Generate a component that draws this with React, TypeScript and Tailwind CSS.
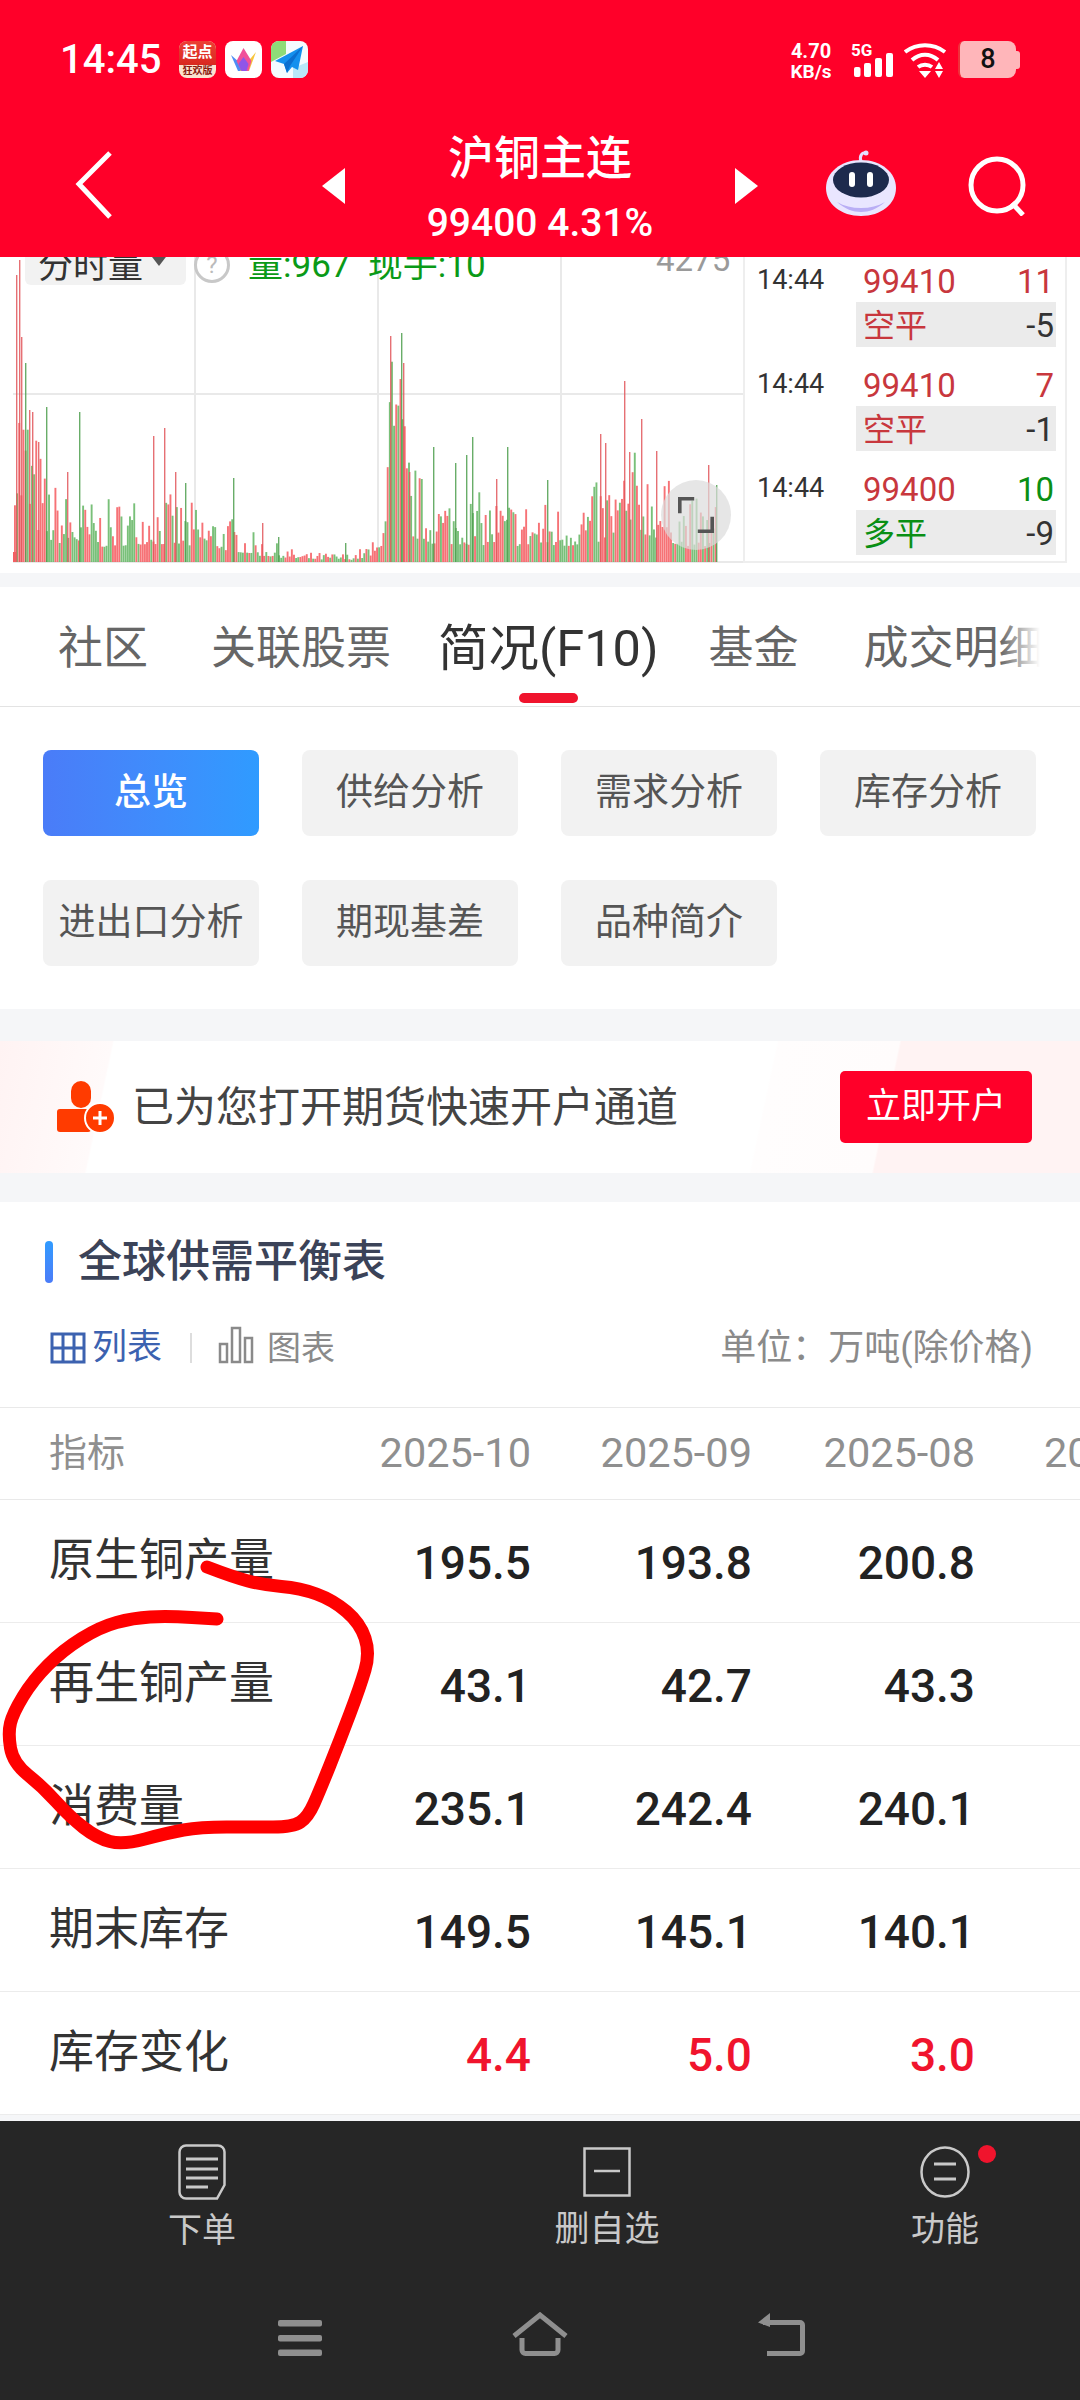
import React from 'react';

const TABS = [
  { label: '社区', className: 'ml-[58px] text-[45px] text-[#666]' },
  { label: '关联股票', className: 'ml-[63px] text-[45px] text-[#666]' },
  { label: '简况(F10)', className: 'ml-[47px] text-[50.5px] text-[#333]' },
  { label: '基金', className: 'ml-[50px] text-[45px] text-[#666]' },
  { label: '成交明细', className: 'ml-[65px] text-[45px] text-[#666]' },
];

const CHIPS = ['总览', '供给分析', '需求分析', '库存分析', '进出口分析', '期现基差', '品种简介'];

const TICKS = [
  { price: '99410', hand: '11', handColor: 'text-[#c8373d]', kind: '空平', kindColor: 'text-[#c8373d]', diff: '-5' },
  { price: '99410', hand: '7', handColor: 'text-[#c8373d]', kind: '空平', kindColor: 'text-[#c8373d]', diff: '-1' },
  { price: '99400', hand: '10', handColor: 'text-[#0a8f14]', kind: '多平', kindColor: 'text-[#0a8f14]', diff: '-9' },
];

const ROWS = [
  { name: '原生铜产量', values: ['195.5', '193.8', '200.8'] },
  { name: '再生铜产量', values: ['43.1', '42.7', '43.3'] },
  { name: '消费量', values: ['235.1', '242.4', '240.1'] },
  { name: '期末库存', values: ['149.5', '145.1', '140.1'] },
  { name: '库存变化', values: ['4.4', '5.0', '3.0'], red: true },
];

// [x, y] of the tall bars, in page pixels
const PEAKS: [number, number, string][] = [
  [16, 275, 'r'], [19, 260, 'r'], [21, 337, 'r'], [25, 363, 'g'], [29, 410, 'r'], [32, 412, 'r'],
  [38, 442, 'r'], [46, 407, 'g'], [67, 472, 'r'], [79, 412, 'g'], [153, 436, 'r'], [164, 428, 'r'],
  [175, 472, 'r'], [185, 483, 'g'], [233, 478, 'g'], [262, 523, 'r'], [278, 537, 'g'], [345, 543, 'g'],
  [390, 336, 'r'], [401, 333, 'g'], [403, 363, 'r'], [409, 472, 'r'], [433, 447, 'g'], [455, 463, 'g'],
  [466, 455, 'g'], [472, 437, 'g'], [496, 479, 'r'], [507, 447, 'g'], [547, 480, 'g'], [600, 434, 'r'],
  [605, 443, 'r'], [624, 381, 'r'], [629, 452, 'r'], [641, 419, 'r'], [656, 451, 'r'], [708, 465, 'r'],
  [716, 485, 'g'],
];

// resting height of the volume bars along the session: [x, top y]
const ENVELOPE: [number, number][] = [
  [14, 400], [30, 450], [45, 500], [70, 515], [100, 520], [150, 510], [190, 520], [230, 530],
  [260, 545], [300, 555], [350, 556], [378, 545], [390, 400], [400, 420], [410, 490], [430, 510],
  [500, 515], [560, 520], [600, 505], [640, 480], [680, 515], [716, 520],
];

const envelopeAt = (x: number) => {
  for (let i = 1; i < ENVELOPE.length; i++) {
    const [x0, y0] = ENVELOPE[i - 1];
    const [x1, y1] = ENVELOPE[i];
    if (x <= x1) return y0 + ((y1 - y0) * (x - x0)) / (x1 - x0);
  }
  return 520;
};

const makeBars = () => {
  let seed = 7;
  const rand = () => {
    seed = (seed * 16807) % 2147483647;
    return seed / 2147483647;
  };
  const bars: { x: number; y: number; c: string }[] = [];
  for (let x = 14; x < 716; x += 2.13) {
    const top = envelopeAt(x);
    const r = rand();
    const h = (562 - top) * (0.35 + r * r * 1.1);
    bars.push({ x, y: Math.max(562 - h, 300), c: rand() > 0.5 ? '#f4595e' : '#62b562' });
  }
  return bars;
};

const BARS = makeBars();

const INK_POINTS: [number, number][] = [
  [207, 1567], [233, 1577], [263, 1585], [300, 1588], [333, 1600], [360, 1623], [370, 1653], [360, 1687],
  [340, 1740], [320, 1790], [308, 1817], [293, 1827], [253, 1827], [200, 1827], [167, 1833], [123, 1845],
  [97, 1838], [70, 1817], [43, 1787], [13, 1763], [8, 1733], [13, 1713], [33, 1680], [63, 1650],
  [100, 1627], [133, 1618], [167, 1616], [217, 1619],
];

const inkPath = () => {
  let d = `M${INK_POINTS[0][0]} ${INK_POINTS[0][1]}`;
  for (let i = 1; i < INK_POINTS.length - 1; i++) {
    const [x, y] = INK_POINTS[i];
    const [nx, ny] = INK_POINTS[i + 1];
    d += ` Q${x} ${y} ${(x + nx) / 2} ${(y + ny) / 2}`;
  }
  const last = INK_POINTS[INK_POINTS.length - 1];
  return `${d} L${last[0]} ${last[1]}`;
};

const StatusBar = () => (
  <div className="flex h-[120px] items-start pt-[41px]">
    <span className="ml-[60px] w-[119px] text-[40px] leading-[38px] font-medium text-white">14:45</span>
    <div className="flex h-[37px] w-[37px] flex-col items-center overflow-hidden rounded-[8px] bg-[#fbe3cf]">
      <div className="h-[24px] w-full bg-gradient-to-b from-[#ec3f35] to-[#d9281f] text-center text-[15px] leading-[22px] font-bold text-white">
        起点
      </div>
      <span className="text-[10px] leading-[12px] font-bold text-[#8a1a10]">狂欢版</span>
    </div>
    <svg viewBox="0 0 37 37" className="ml-[9px] h-[37px] w-[37px]">
      <rect width="37" height="37" rx="8" fill="#fff" />
      <path d="M6 14l7 16h11z" fill="#4e8df5" />
      <path d="M31 11l-7 19H15z" fill="#f8c53a" />
      <path d="M18.500 7l-7 13 5 10h7l3-10z" fill="#f0509a" />
      <path d="M18.500 16l-5 7 3 7h5l2-7z" fill="#8f55e8" />
    </svg>
    <svg viewBox="0 0 37 37" className="ml-[9px] h-[37px] w-[37px]">
      <rect width="37" height="37" rx="8" fill="#f4fbff" />
      <path d="M0 8a8 8 0 0 1 8-8h7v13L0 21z" fill="#8fdc78" />
      <path d="M22 37h7a8 8 0 0 0 8-8v-8l-15 6z" fill="#b9e7f8" />
      <path d="M32 5L4 20l9 3 3 9 5-6 6 3z" fill="#1490ee" />
      <path d="M32 5L13 23l3 9 3-7z" fill="#0b6fd0" />
    </svg>
    <div className="ml-auto flex items-start">
      <div className="w-[46px] text-center text-[20px] leading-[20px] font-bold text-white">
        4.70
        <br />
        <span className="text-[19px]">KB/s</span>
      </div>
      <div className="relative ml-[18px] h-[37px] w-[42px]">
        <span className="absolute top-[0] left-[-1px] text-[17px] leading-[18px] font-bold text-white">5G</span>
        <svg viewBox="0 0 42 37" className="h-[37px] w-[42px]">
          <rect x="2" y="26" width="6.500" height="10" rx="2" fill="#fff" />
          <rect x="12" y="22" width="7" height="14" rx="2" fill="#fff" />
          <rect x="23" y="17" width="7" height="19" rx="2" fill="#fff" />
          <rect x="34" y="12" width="7" height="24" rx="2" fill="#fff" />
        </svg>
      </div>
      <svg viewBox="0 0 44 38" className="ml-[10px] h-[38px] w-[44px]" fill="none" stroke="#fff" strokeWidth="4">
        <path d="M1 11c12-9 28-9 40 0M8 19c8-7 18-7 26 0M14 26c4-3 10-3 14 0" />
        <path d="M15 30h12l-6 7zM35 21l4 7h-8zM31 30h8l-4 7z" fill="#fff" stroke="none" />
      </svg>
      <div className="ml-[10px] flex h-[37px] items-center">
        <div className="flex h-[37px] w-[58px] items-center justify-center rounded-l-[6px] rounded-r-[8px] border-l-2 border-[#f0303a] bg-[#ffb6ba] text-[27px] font-medium text-[#111]">
          8
        </div>
        <div className="h-[18px] w-[4px] rounded-r-[3px] bg-[#ffb6ba]" />
      </div>
      <div className="w-[60px]" />
    </div>
  </div>
);

const NavBar = () => (
  <div className="relative flex h-[137px] items-start">
    <svg viewBox="0 0 40 70" className="mt-[30px] ml-[74px] h-[70px] w-[40px]" fill="none" stroke="#fff" strokeWidth="5">
      <path d="M36 3L5 34l31 33" />
    </svg>
    <div className="mt-[48px] ml-[208px] h-0 w-0 border-y-[18px] border-r-[23px] border-y-transparent border-r-white" />
    <div className="flex w-[390px] flex-col items-center">
      <span className="mt-[8px] text-[46px] leading-[60px] font-medium text-white">沪铜主连</span>
      <span className="mt-[13px] text-[39px] leading-[44px] font-medium text-white">99400 4.31%</span>
    </div>
    <div className="mt-[48px] h-0 w-0 border-y-[18px] border-l-[23px] border-y-transparent border-l-white" />
    <svg viewBox="0 0 72 68" className="mt-[30px] ml-[67px] h-[68px] w-[72px]">
      <path d="M36 12c-2-6 1-10 5-9" fill="none" stroke="#e4dcff" strokeWidth="3" />
      <circle cx="41" cy="3" r="2.500" fill="#e4dcff" />
      <path d="M36 10c21 0 35 13 35 28 0 16-15 28-35 28S1 54 1 38C1 23 15 10 36 10z" fill="#e9e6ff" />
      <path d="M12 52c8 7 16 10 24 10s16-3 24-10c-7 4-15 6-24 6s-17-2-24-6z" fill="#b9aef5" />
      <ellipse cx="36" cy="30" rx="28" ry="17.500" fill="#1d2a4d" />
      <rect x="24" y="22" width="6" height="15" rx="3" fill="#fff" />
      <rect x="42" y="22" width="6" height="15" rx="3" fill="#fff" />
    </svg>
    <svg viewBox="0 0 64 60" className="mt-[36px] ml-[69px] h-[60px] w-[64px]" fill="none" stroke="#fff" strokeWidth="5">
      <circle cx="31" cy="29" r="26" />
      <path d="M46 47l11 12" />
    </svg>
  </div>
);

const Chart = () => (
  <svg viewBox="0 257 743 316" className="block h-[316px] w-[743px]">
    <g stroke="#e9e9e9" strokeWidth="2">
      <path d="M13 394H743M195 257V562M378 257V562M561 257V562M13 562H743" />
    </g>
    {BARS.map((bar, i) => (
      <rect key={i} x={bar.x} y={bar.y} width="1.9" height={562 - bar.y} fill={bar.c} opacity="0.85" />
    ))}
    {PEAKS.map(([x, y, c], i) => (
      <rect key={i} x={x} y={y} width="1.4" height={562 - y} fill={c === 'r' ? '#e2575c' : '#4f9f4f'} opacity="0.85" />
    ))}
    <rect x="13" y="552" width="3" height="10" fill="#f25f63" />
  </svg>
);

const ChartSection = () => (
  <div className="flex h-[316px] overflow-hidden bg-white">
    <div className="relative h-[316px] w-[743px] shrink-0">
      <Chart />
      <div className="absolute top-[-9px] left-[25px] flex h-[37px] w-[161px] items-center rounded-b-[6px] bg-[#f2f2f2] pl-[13px] text-[35px] leading-[37px] text-[#333]">
        分时量
        <div className="mt-[-14px] ml-[6px] h-0 w-0 border-x-[10px] border-t-[13px] border-x-transparent border-t-[#555]" />
      </div>
      <div className="absolute top-[-10px] left-[194px] flex h-[36px] w-[36px] items-center justify-center rounded-full border-[3px] border-[#c8c8c8] text-[24px] text-[#bbb]">
        ?
      </div>
      <div className="absolute top-[-11px] left-[248px] text-[35px] leading-[40px] whitespace-pre text-[#0a9a17]">
        量:967  现手:10
      </div>
      <div className="absolute top-[-17px] left-[656px] text-[33px] leading-[40px] text-[#9a9a9a]">4275</div>
      <div className="absolute top-[223px] left-[661px] flex h-[70px] w-[70px] items-center justify-center rounded-full bg-[#dcdcdc]/70">
        <svg viewBox="0 0 40 40" className="h-[36px] w-[36px]" fill="none" stroke="#555" strokeWidth="4">
          <path d="M2 18V2h16M38 22v16H22" />
        </svg>
      </div>
    </div>
    <div className="h-[306px] w-[324px] shrink-0 border-x-2 border-b-2 border-[#eeeeee]">
      {TICKS.map((tick, i) => (
        <div key={i} className="flex h-[104px]">
          <span className="w-[111px] pt-[5px] pl-[12px] text-[27px] leading-[36px] text-[#333]">14:44</span>
          <div className="w-[200px]">
            <div className="flex h-[45px] items-center justify-between pt-[5px] pr-[2px] pl-[7px] text-[33px]">
              <span className="text-[#c8373d]">{tick.price}</span>
              <span className={tick.handColor}>{tick.hand}</span>
            </div>
            <div className="flex h-[45px] items-center justify-between bg-[#ebebeb] pt-[2px] pr-[2px] pl-[7px] text-[32px]">
              <span className={tick.kindColor}>{tick.kind}</span>
              <span className="text-[33px] text-[#333]">{tick.diff}</span>
            </div>
          </div>
        </div>
      ))}
    </div>
  </div>
);

const Tabs = () => (
  <div className="relative flex h-[120px] items-center overflow-hidden border-b border-[#e3e3e3] bg-white pt-[4px] whitespace-nowrap">
    {TABS.map((tab) => (
      <span key={tab.label} className={tab.className}>
        {tab.label}
      </span>
    ))}
    <div className="absolute top-[106px] left-[519px] h-[10px] w-[59px] rounded-full bg-[#f0142d]" />
    <div className="absolute top-0 right-0 h-[118px] w-[80px] bg-gradient-to-r from-white/0 to-white to-[50%]" />
  </div>
);

const Chips = () => (
  <div className="grid grid-cols-[216px_216px_216px_216px] gap-x-[43px] gap-y-[44px] bg-white p-[43px]">
    {CHIPS.map((chip, i) => (
      <div
        key={chip}
        className={
          i === 0
            ? 'flex h-[86px] items-center justify-center rounded-[8px] bg-gradient-to-r from-[#4a7cf8] to-[#2f9bff] text-[37px] font-medium text-white'
            : 'flex h-[86px] items-center justify-center rounded-[8px] bg-[#f2f2f2] text-[37px] text-[#555]'
        }
      >
        {chip}
      </div>
    ))}
  </div>
);

const Promo = () => (
  <div className="mt-[32px] flex h-[132px] items-center bg-[linear-gradient(102deg,#fff3f3_0,#fffafa_110px,#ffffff_112px,#ffffff_760px,#fffdfd_762px,#fffcfc_880px,#fff3f3_882px)]">
    <svg viewBox="0 0 60 54" className="ml-[56px] h-[54px] w-[60px]">
      <rect x="15" y="1" width="20" height="27" rx="10" fill="#ff3b00" />
      <rect x="1" y="29" width="34" height="23" rx="3" fill="#ff3b00" />
      <circle cx="44" cy="38" r="15" fill="#ff3b00" stroke="#fff" strokeWidth="2" />
      <path d="M44 31v14M37 38h14" stroke="#fff" strokeWidth="3" />
    </svg>
    <span className="ml-[16px] text-[42px] text-[#444]">已为您打开期货快速开户通道</span>
    <div className="mr-[48px] ml-auto flex h-[72px] w-[192px] items-center justify-center rounded-[5px] bg-[#ff0029] text-[35px] text-white">
      立即开户
    </div>
  </div>
);

const Title = () => (
  <div className="mt-[29px] bg-white pb-[33px]">
    <div className="flex h-[120px] items-center">
      <div className="ml-[45px] h-[42px] w-[8px] rounded-full bg-gradient-to-b from-[#2f9bff] to-[#4a7cf8]" />
      <span className="ml-[25px] text-[44px] font-medium text-[#3b4358]">全球供需平衡表</span>
    </div>
    <div className="flex h-[52px] items-center">
      <svg viewBox="0 0 36 32" className="ml-[50px] h-[32px] w-[36px]" fill="none" stroke="#3c62b0" strokeWidth="3">
        <path d="M2 2h32v28H2zM2 16h32M13 2v28M24 2v28" />
      </svg>
      <span className="ml-[6px] text-[35px] text-[#3c62b0]">列表</span>
      <div className="ml-[28px] h-[30px] w-[2px] bg-[#dddddd]" />
      <svg viewBox="0 0 36 38" className="mt-[-6px] ml-[26px] h-[38px] w-[36px]" fill="none" stroke="#8a8a8a" strokeWidth="2.500">
        <path d="M2 18h7v18H2zM14 2h8v34h-8zM27 12h7v24h-7z" />
      </svg>
      <span className="ml-[13px] text-[34px] text-[#8a8a8a]">图表</span>
      <span className="mr-[47px] ml-auto text-[36px] whitespace-pre text-[#8a8a8a]">单位：万吨(除价格)</span>
    </div>
  </div>
);

const Table = () => (
  <div className="overflow-hidden bg-white">
    <div className="grid h-[93px] grid-cols-[300px_231px_221px_223px_105px] items-center border-y border-[#e9e9e9] text-[41.500px] text-[#8f8f8f]">
      <span className="pl-[49px] text-[38px]">指标</span>
      <span className="text-right">2025-10</span>
      <span className="text-right">2025-09</span>
      <span className="text-right">2025-08</span>
      <span className="overflow-hidden pl-[69px] whitespace-nowrap">2025-07</span>
    </div>
    {ROWS.map((row) => (
      <div key={row.name} className="grid h-[123px] grid-cols-[300px_231px_221px_223px_105px] items-center border-b border-[#ececec]">
        <span className="pl-[49px] text-[45px] text-[#333]">{row.name}</span>
        {row.values.map((value, i) => (
          <span
            key={i}
            className={
              row.red
                ? 'pt-[4px] text-right text-[46px] font-medium text-[#f0142d]'
                : 'pt-[4px] text-right text-[46px] font-medium text-[#222]'
            }
          >
            {value}
          </span>
        ))}
      </div>
    ))}
  </div>
);

const Footer = () => (
  <div className="mt-[6px] h-[279px] bg-[#262626]">
    <div className="grid h-[147px] grid-cols-[404px_406px_270px] text-[34px] text-[#c9c9c9]">
      <div className="flex flex-col items-center pt-[23px]">
        <svg viewBox="0 0 48 56" className="h-[56px] w-[48px]" fill="none" stroke="#c9c9c9" strokeWidth="2.500">
          <path d="M8 1.500h32a6.500 6.500 0 0 1 6.500 6.500v33L39 54.500H8A6.500 6.500 0 0 1 1.500 48V8A6.500 6.500 0 0 1 8 1.500z" />
          <path d="M8 15h32M8 25h32M8 34h32M8 43h22" strokeWidth="3" />
        </svg>
        <span className="mt-[10px] leading-[40px]">下单</span>
      </div>
      <div className="flex flex-col items-center pt-[26px]">
        <svg viewBox="0 0 48 50" className="h-[50px] w-[48px]" fill="none" stroke="#c9c9c9" strokeWidth="2.500">
          <path d="M1.500 1.500h45v47h-45zM11 24h26" />
        </svg>
        <span className="mt-[13px] text-[35px] leading-[40px]">删自选</span>
      </div>
      <div className="relative flex flex-col items-center pt-[25px]">
        <svg viewBox="0 0 50 52" className="h-[52px] w-[50px]" fill="none" stroke="#c9c9c9" strokeWidth="2.500">
          <ellipse cx="25" cy="26" rx="23.500" ry="24.500" />
          <path d="M14 18h22M14 33h22" strokeWidth="3" />
        </svg>
        <span className="mt-[11px] leading-[40px]">功能</span>
        <div className="absolute top-[24px] left-[168px] h-[18px] w-[18px] rounded-full bg-[#f0142d]" />
      </div>
    </div>
    <div className="mt-[44px] flex items-end">
      <svg viewBox="0 0 44 36" className="ml-[278px] h-[36px] w-[44px]" fill="#8f8f8f">
        <rect width="44" height="6.500" rx="2" />
        <rect y="15" width="44" height="6.500" rx="2" />
        <rect y="29.500" width="44" height="6.500" rx="2" />
      </svg>
      <svg viewBox="0 0 58 44" className="ml-[189px] h-[44px] w-[58px]" fill="none" stroke="#8f8f8f" strokeWidth="5">
        <path d="M3 24L29 3l26 21M11 26v12a3.500 3.500 0 0 0 3.500 3.500h29A3.500 3.500 0 0 0 47 38V26" />
      </svg>
      <svg viewBox="0 0 48 43" className="ml-[188px] h-[43px] w-[48px]" fill="none" stroke="#8f8f8f" strokeWidth="5">
        <path d="M10 40.500h33a2.500 2.500 0 0 0 2.500-2.500V12A2.500 2.500 0 0 0 43 9.500H6" />
        <path d="M13 0L1 9.500 13 14z" fill="#8f8f8f" stroke="none" />
      </svg>
    </div>
  </div>
);

const App = () => (
  <div className="relative h-[2400px] w-[1080px] overflow-hidden bg-[#f5f6f8] [font-family:Roboto,'Noto_Sans_CJK_SC',sans-serif]">
    <div className="relative z-10 h-[257px] bg-[#ff0029]">
      <StatusBar />
      <NavBar />
    </div>
    <ChartSection />
    <div className="h-[14px]" />
    <Tabs />
    <Chips />
    <Promo />
    <Title />
    <Table />
    <Footer />
    <svg viewBox="0 0 1080 2400" className="pointer-events-none absolute top-0 left-0 z-20 h-[2400px] w-[1080px]" fill="none">
      <path d={inkPath()} stroke="#ff0000" strokeWidth="13" strokeLinecap="round" strokeLinejoin="round" />
    </svg>
  </div>
);

export default App;
